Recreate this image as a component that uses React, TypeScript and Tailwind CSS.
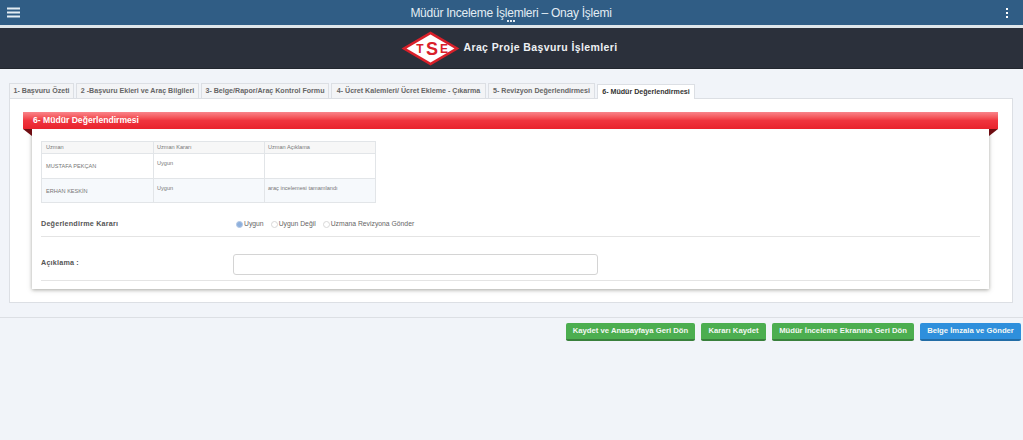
// App.tsx
import React from 'react';

const tabs = [
  { label: '1- Başvuru Özeti', width: 'w-[65px]' },
  { label: '2 -Başvuru Ekleri ve Araç Bilgileri', width: 'w-[123px]' },
  { label: '3- Belge/Rapor/Araç Kontrol Formu', width: 'w-[128px]' },
  { label: '4- Ücret Kalemleri/ Ücret Ekleme - Çıkarma', width: 'w-[155px]' },
  { label: '5- Revizyon Değerlendirmesi', width: 'w-[107px]' },
  { label: '6- Müdür Değerlendirmesi', width: 'w-[98px]', active: true },
];

const rows = [
  { name: 'MUSTAFA PEKÇAN', karar: 'Uygun', aciklama: '', bg: 'bg-white' },
  { name: 'ERHAN KESKİN', karar: 'Uygun', aciklama: 'araç incelemesi tamamlandı', bg: 'bg-[#f6f9fc]' },
];

const buttons = [
  { label: 'Kaydet ve Anasayfaya Geri Dön', width: 'w-[129px]', color: 'bg-[#4cae50] border-[#39803c]' },
  { label: 'Kararı Kaydet', width: 'w-[65px]', color: 'bg-[#4cae50] border-[#39803c]' },
  { label: 'Müdür İnceleme Ekranına Geri Dön', width: 'w-[142px]', color: 'bg-[#4cae50] border-[#39803c]' },
  { label: 'Belge İmzala ve Gönder', width: 'w-[101px]', color: 'bg-[#2e8fdc] border-[#226ca6]' },
];

const Radio: React.FC<{ label: string; checked?: boolean }> = ({ label, checked }) => (
  <span className="flex items-center text-[6.8px] text-[#666]">
    <span
      className={`h-[7px] w-[7px] rounded-full border ${
        checked ? 'border-[#b3c9e6] bg-[#8fb0dc]' : 'border-[#d8d8d8] bg-white'
      }`}
    />
    <span className="ml-px">{label}</span>
  </span>
);

const TseLogo: React.FC = () => (
  <svg width="59" height="35" viewBox="0 0 59 35" className="shrink-0">
    <polygon points="29.5,0.5 58.5,17.5 29.5,34.5 0.5,17.5" fill="#d9202a" />
    <polygon points="29.5,3.5 53.5,17.5 29.5,31.5 5.5,17.5" fill="#ffffff" />
    <text x="19" y="22" textAnchor="middle" fontSize="12" fontWeight="700" fill="#d9202a" fontFamily="Liberation Sans, sans-serif">T</text>
    <text x="31" y="24" textAnchor="middle" fontSize="18" fontWeight="700" fill="#d9202a" fontFamily="Liberation Sans, sans-serif">S</text>
    <text x="43" y="22" textAnchor="middle" fontSize="12" fontWeight="700" fill="#d9202a" fontFamily="Liberation Sans, sans-serif">E</text>
  </svg>
);

const App: React.FC = () => {
  return (
    <div className="h-[440px] w-[1023px] overflow-hidden bg-[#f1f4f9] font-['Liberation_Sans',sans-serif]">
      {/* top bar */}
      <div className="flex h-[25px] items-center justify-between bg-[#305d85] pl-[7px] pr-[15px]">
        <svg width="13" height="11" viewBox="0 0 13 11" className="shrink-0">
          <rect x="0" y="0.5" width="13" height="2" fill="#e4edf3" />
          <rect x="0" y="4.5" width="13" height="2" fill="#e4edf3" />
          <rect x="0" y="8.5" width="13" height="2" fill="#e4edf3" />
        </svg>
        <div className="relative text-[12px] tracking-[-0.25px] text-[#e3edf4]">
          Müdür Inceleme İşlemleri – Onay İşlemi
          <span className="absolute bottom-0 left-1/2 flex -translate-x-1/2 gap-px">
            <span className="h-[2px] w-[2px] bg-[#dfe8ef]" />
            <span className="h-[2px] w-[2px] bg-[#dfe8ef]" />
            <span className="h-[2px] w-[2px] bg-[#dfe8ef]" />
          </span>
        </div>
        <div className="flex w-[6px] flex-col items-end gap-[2px]">
          <span className="h-[2px] w-[2px] bg-white" />
          <span className="h-[2px] w-[2px] bg-white" />
          <span className="h-[2px] w-[2px] bg-white" />
        </div>
      </div>
      <div className="h-[3px] bg-[#dfe6ea]" />
      {/* başlık */}
      <div className="flex h-[41px] items-center justify-center gap-[3px] border-b border-[#22262e] bg-[#2b303b] pr-[4px]">
        <TseLogo />
        <span className="text-[10.5px] font-bold tracking-[0.4px] text-[#eef1f4]">Araç Proje Başvuru İşlemleri</span>
      </div>

      <div className="ml-[9px] mr-[10px] mt-[14px]">
        {/* tabs */}
        <div className="flex gap-[2px]">
          {tabs.map((tab) => (
            <div
              key={tab.label}
              className={`${tab.width} relative flex h-[15px] items-center justify-center whitespace-nowrap border border-b-0 border-[#dcdfe4] pt-px text-[7.1px] font-bold ${
                tab.active ? 'top-px z-10 bg-white text-[#333]' : 'bg-[#f3f4f6] text-[#666]'
              }`}
            >
              {tab.label}
            </div>
          ))}
        </div>

        {/* panel */}
        <div className="h-[205px] border border-[#dcdfe4] bg-white pl-[13px] pr-[14px] pt-[13px]">
          <div className="relative z-10 flex h-[17px] items-center bg-gradient-to-b from-[#f9838a] via-[#f0343e] to-[#e8222c] pl-[10px] text-[8.6px] font-bold text-white">
            6- Müdür Değerlendirmesi
            <span className="absolute left-0 top-full h-0 w-0 border-l-[9px] border-t-[7px] border-l-transparent border-t-[#6e0d12]" />
            <span className="absolute right-0 top-full h-0 w-0 border-r-[9px] border-t-[7px] border-r-transparent border-t-[#6e0d12]" />
          </div>
          <div className="mx-[9px] h-[160px] bg-white px-[9px] pt-[12px] shadow-[0_1px_4px_rgba(90,90,80,0.55)]">
            {/* uzman tablosu */}
            <div className="w-[335px] border border-[#e2e5e8] text-[5.6px] text-[#777]">
              <div className="grid h-[11px] grid-cols-3 items-center bg-[#f7f7f7]">
                <span className="pl-[4px]">Uzman</span>
                <span className="border-l border-[#e2e5e8] pl-[3px] leading-[11px]">Uzman Kararı</span>
                <span className="border-l border-[#e2e5e8] pl-[3px] leading-[11px]">Uzman Açıklama</span>
              </div>
              {rows.map((row) => (
                <div key={row.name} className={`grid h-[24.5px] grid-cols-3 border-t border-[#e2e5e8] ${row.bg}`}>
                  <span className="pl-[4px] pt-[8px]">{row.name}</span>
                  <span className="border-l border-[#e2e5e8] pl-[3px] pt-[5px]">{row.karar}</span>
                  <span className="border-l border-[#e2e5e8] pl-[3px] pt-[5px]">{row.aciklama}</span>
                </div>
              ))}
            </div>

            {/* form */}
            <div className="mt-[9px] flex h-[25px] items-center border-b border-[#e4e4e4] pt-px">
              <span className="w-[193px] text-[7.2px] font-bold tracking-[0.2px] text-[#555]">Değerlendirme Kararı</span>
              <span className="ml-[2px] flex items-center gap-[7px]">
                <Radio label="Uygun" checked />
                <Radio label="Uygun Değil" />
                <Radio label="Uzmana Revizyona Gönder" />
              </span>
            </div>
            <div className="flex h-[44px] items-center border-b border-[#e4e4e4] pt-[11px]">
              <span className="mb-[2px] w-[192px] text-[7.2px] font-bold tracking-[0.2px] text-[#555]">Açıklama :</span>
              <input
                type="text"
                className="h-[21px] w-[365px] rounded-[3px] border border-[#d4d4d4] bg-white"
              />
            </div>
          </div>
        </div>
      </div>

      {/* alt butonlar */}
      <div className="mt-[14px] flex justify-end gap-[6px] border-t border-[#dcdfe4] pr-[2px] pt-[5px]">
        {buttons.map((button) => (
          <button
            key={button.label}
            className={`${button.width} ${button.color} h-[18px] whitespace-nowrap rounded-[2px] border-b-2 text-[7.7px] font-bold text-[#f4f8f4]`}
          >
            {button.label}
          </button>
        ))}
      </div>
    </div>
  );
};

export default App;
